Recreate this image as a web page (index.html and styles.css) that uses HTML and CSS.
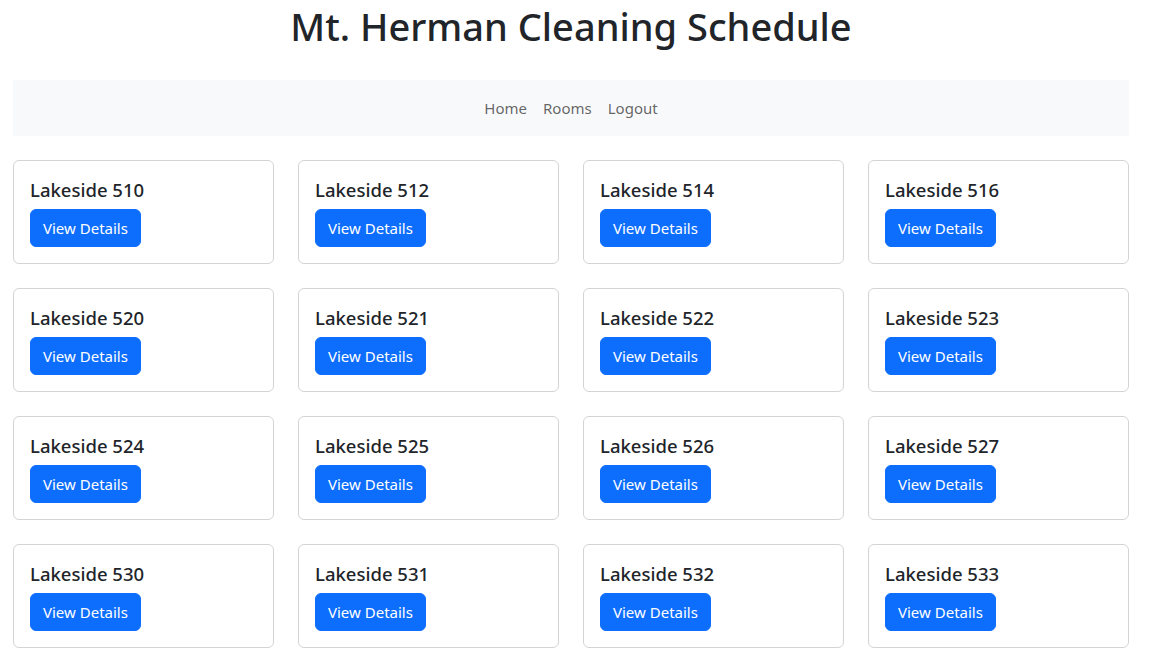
FILE: index.html
```html
<!DOCTYPE html>
<html lang="en">
<head>
<meta charset="utf-8">
<title>Mt. Herman Cleaning Schedule</title>
<link rel="stylesheet" href="styles.css">
</head>
<body>
<div class="container">
  <h1 class="page-title">Mt. Herman Cleaning Schedule</h1>
  <nav class="navbar">
    <a class="nav-link" href="#">Home</a>
    <a class="nav-link" href="#">Rooms</a>
    <a class="nav-link" href="#">Logout</a>
  </nav>
  <div class="grid">
    <div class="card"><h5 class="card-title">Lakeside 510</h5><a class="btn" href="#">View Details</a></div>
    <div class="card"><h5 class="card-title">Lakeside 512</h5><a class="btn" href="#">View Details</a></div>
    <div class="card"><h5 class="card-title">Lakeside 514</h5><a class="btn" href="#">View Details</a></div>
    <div class="card"><h5 class="card-title">Lakeside 516</h5><a class="btn" href="#">View Details</a></div>
    <div class="card"><h5 class="card-title">Lakeside 520</h5><a class="btn" href="#">View Details</a></div>
    <div class="card"><h5 class="card-title">Lakeside 521</h5><a class="btn" href="#">View Details</a></div>
    <div class="card"><h5 class="card-title">Lakeside 522</h5><a class="btn" href="#">View Details</a></div>
    <div class="card"><h5 class="card-title">Lakeside 523</h5><a class="btn" href="#">View Details</a></div>
    <div class="card"><h5 class="card-title">Lakeside 524</h5><a class="btn" href="#">View Details</a></div>
    <div class="card"><h5 class="card-title">Lakeside 525</h5><a class="btn" href="#">View Details</a></div>
    <div class="card"><h5 class="card-title">Lakeside 526</h5><a class="btn" href="#">View Details</a></div>
    <div class="card"><h5 class="card-title">Lakeside 527</h5><a class="btn" href="#">View Details</a></div>
    <div class="card"><h5 class="card-title">Lakeside 530</h5><a class="btn" href="#">View Details</a></div>
    <div class="card"><h5 class="card-title">Lakeside 531</h5><a class="btn" href="#">View Details</a></div>
    <div class="card"><h5 class="card-title">Lakeside 532</h5><a class="btn" href="#">View Details</a></div>
    <div class="card"><h5 class="card-title">Lakeside 533</h5><a class="btn" href="#">View Details</a></div>
  </div>
</div>
</body>
</html>
```
FILE: styles.css
```css
* { box-sizing: border-box; }
html, body {
  margin: 0;
  padding: 0;
  background: #fff;
  color: #212529;
  font-family: "Noto Sans", "Open Sans", sans-serif;
  font-size: 16px;
  line-height: 1.5;
}
.container {
  width: 1116px;
  margin-left: 13px;
}
.page-title {
  margin: 0 0 30px 0;
  padding-top: 2px;
  text-align: center;
  font-size: 38px;
  font-weight: 500;
  line-height: 48px;
}
.navbar {
  display: flex;
  justify-content: center;
  align-items: center;
  height: 56px;
  padding: 8px 0;
  background: #f8f9fa;
  margin-bottom: 24px;
}
.nav-link {
  padding: 8px;
  color: rgba(0, 0, 0, 0.62);
  text-decoration: none;
  font-size: 15px;
  line-height: 24px;
}
.grid {
  display: grid;
  grid-template-columns: repeat(4, 1fr);
  gap: 24px;
  padding-bottom: 24px;
}
.card {
  border: 1px solid #d4d4d4;
  border-radius: 6px;
  padding: 16px;
  display: flex;
  flex-direction: column;
  align-items: flex-start;
}
.card-title {
  margin: 0 0 7px 0;
  padding-top: 1px;
  font-size: 18.5px;
  font-weight: 500;
  line-height: 24px;
}
.btn {
  display: inline-block;
  background: #0d6efd;
  color: #fff;
  text-decoration: none;
  padding: 6px 12px;
  border-radius: 6px;
  line-height: 24px;
  font-size: 15px;
  border: 1px solid #0d6efd;
}
```
